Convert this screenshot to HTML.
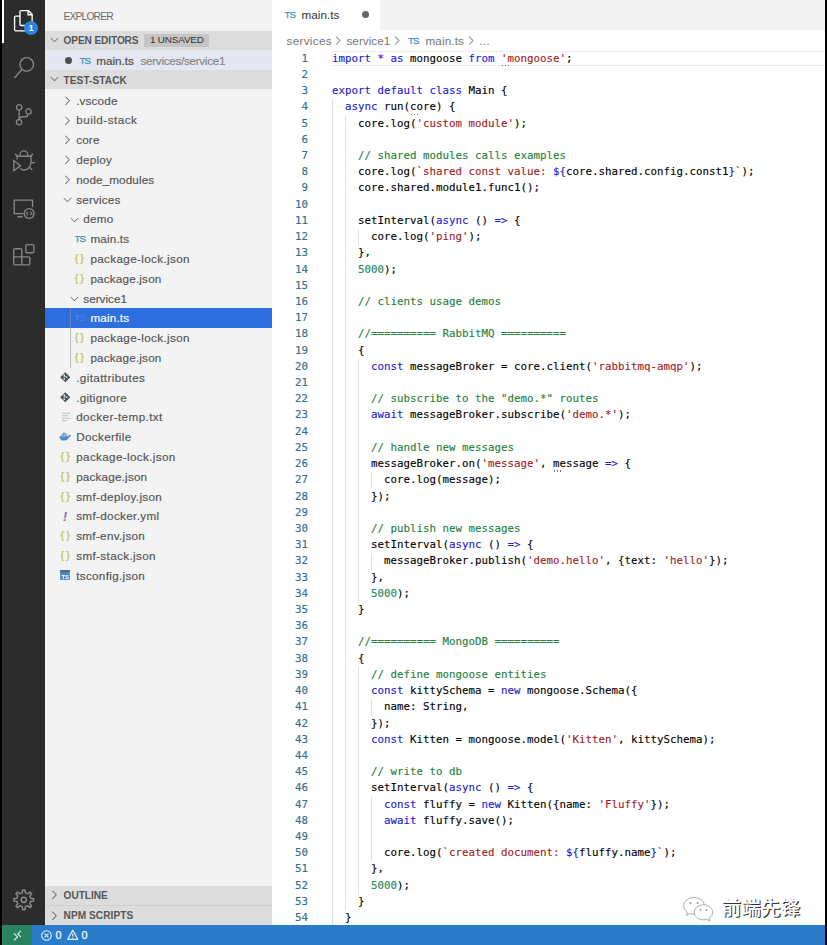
<!DOCTYPE html>
<html lang="en">
<head>
<meta charset="utf-8">
<title>main.ts — test-stack</title>
<style>
*{box-sizing:border-box;margin:0;padding:0}
html,body{width:827px;height:945px;overflow:hidden;background:#000}
body{position:relative;font-family:"Liberation Sans","Noto Sans CJK SC",sans-serif;font-size:11.7px;color:#555}
#win{position:absolute;left:2px;top:0;width:823px;height:945px;background:#fff;overflow:hidden}
#pg{position:absolute;left:-2px;top:0;width:827px;height:945px}
#act{position:absolute;left:2px;top:0;width:43.2px;height:925px;background:#2c2c2c}
#act .ind{position:absolute;left:0;top:0;width:2px;height:42.5px;background:#fff}
#act svg{position:absolute;left:10.8px;width:21.6px;height:21.6px;fill:#868686;overflow:visible}
#act svg.st{fill:none;stroke:#868686;stroke-width:1.5}
#act .bdg{position:absolute;left:22.100px;top:20.800px;width:14px;height:14px;border-radius:50%;background:#2d84dc;color:#fff;font-size:8.500px;font-weight:bold;text-align:center;line-height:14px}
#side{position:absolute;left:45px;top:0;width:227px;height:925px;background:#f3f3f3;overflow:hidden}
#side .abs{position:absolute}
.ttl{position:absolute;left:18.400px;top:10.500px;font-size:10.300px;line-height:12px;color:#6a6a6a;letter-spacing:-0.828px}
.hdr{position:absolute;left:0;width:227px;height:19.8px;background:#dcdcdc;font-weight:bold;font-size:10.1px;color:#565656;line-height:19.6px}
.hdr .t{position:absolute;left:18.6px;top:0;white-space:nowrap}
.hdr .chev{position:absolute;left:2.600px;top:2.600px;width:13px;height:13px;fill:#5a5a5a}
.badge{position:absolute;left:99.2px;top:3.400px;height:12.3px;width:65.3px;background:#c4c4c4;color:#333;font-weight:normal;font-size:9.9px;line-height:12.600px;text-align:center;letter-spacing:-0.173px}
.row{-webkit-text-stroke:0.18px;position:absolute;left:45px;width:227px;height:19.8px;line-height:19.2px;white-space:nowrap;color:#555}
.row.sel{background:#2e6fdf;color:#fff}
.row>span{position:absolute;top:0}
.chev{width:13px;height:13px;fill:#646465}
.row .cv .chev{position:absolute;left:0;top:3.400px}
.icw{width:14px;height:19.8px}
.icw .fi{position:absolute}
.ts{-webkit-text-stroke:0.25px;position:absolute;left:1px;top:0;color:#4a93b6;font-size:9.800px;letter-spacing:-1.1px;line-height:19.6px}
.json{position:absolute;left:1.300px;top:0;color:#c0c048;font-size:11px;letter-spacing:1.9px;line-height:18.400px}
.yml{position:absolute;left:3.600px;top:1.800px;color:#9b6bc0;font-size:12.500px;font-style:italic;font-weight:bold;line-height:19.500px}
.sel .ts{color:#4a80e2}
.tg{position:absolute;left:70px;width:1px;background:rgba(150,150,150,.6)}
#ed{position:absolute;left:272px;top:0;width:553px;height:925px;background:#fff}
#tabs{position:absolute;left:272px;top:0;width:553px;height:30.2px;background:#f3f3f3}
#tab{position:absolute;left:0;top:0;width:107.500px;height:30.2px;background:#fff;color:#333}
#tab span,#bc span{position:absolute;top:0;white-space:nowrap}
#bc{position:absolute;left:272px;top:30.5px;width:553px;height:20px;line-height:20.400px;color:#757575}
#bc svg{position:absolute;top:3.800px;width:12.500px;height:12.500px;fill:#7d7d7d}
.ln{position:absolute;left:272.5px;width:35.500px;text-align:right;height:16.2px;line-height:16.2px;color:#33708a;-webkit-text-stroke:0.15px;font-family:"DejaVu Sans Mono","Liberation Mono",monospace;font-size:10.8px}
.cl{-webkit-text-stroke:0.12px;position:absolute;left:332px;height:16.2px;line-height:16.2px;color:#000;font-family:"DejaVu Sans Mono","Liberation Mono",monospace;font-size:10.8px;white-space:pre}
.k{color:#2018d8}.s{color:#a01c1c}.c{color:#23803c}.n{color:#238a64}
.ig{position:absolute;width:1px;background:#dfdfdf}
.dots{position:absolute;height:1.500px;width:9px}
.dots i{position:absolute;top:0;width:1.600px;height:1.600px;background:#777}
.dots i:nth-child(1){left:0.500px}.dots i:nth-child(2){left:3.600px}.dots i:nth-child(3){left:6.700px}
#cur{position:absolute;left:332px;top:50.7px;width:491.500px;height:15.800px;border-top:1px solid #ececec;border-bottom:1px solid #ececec}
#status{-webkit-text-stroke:0.25px;position:absolute;left:2px;top:925px;width:823px;height:20px;background:#2b7bcb;color:#fff;font-size:10.8px;line-height:20.400px}
#status svg{position:absolute;overflow:visible}
#remote{position:absolute;left:0;top:0;width:30px;height:20px;background:#2a8360}
#wm{position:absolute;left:721.500px;top:895px;font-size:19.700px;line-height:26px;color:#fff;white-space:nowrap;font-family:"Liberation Sans","Noto Sans CJK SC",sans-serif;font-weight:500;text-shadow:1.100px 1.100px 0.400px rgba(30,30,30,.92)}
#wmi{position:absolute;left:681px;top:894px;width:36px;height:30px;overflow:visible}
</style>
</head>
<body>
<div id="win"><div id="pg">

<!-- activity bar -->
<div id="act">
  <div class="ind"></div>
  <!-- explorer -->
  <svg viewBox="0 0 24 24" style="top:9.950px;fill:#fff"><path d="M17.5 0h-9L7 1.500V6H2.500L1 7.500v15.070L2.500 24h12.070L16 22.570V18h4.700l1.300-1.430V4.500L17.500 0zm0 2.120l2.380 2.380H17.500V2.120zm-3 20.380h-12v-15H7v9.070L8.500 18h6v4.500zm6-6h-12v-15H16V6h4.500v10.500z"/></svg>
  <div class="bdg">1</div>
  <!-- search -->
  <svg viewBox="0 0 24 24" style="top:56.550px"><path d="M15.250 0a8.250 8.250 0 0 0-6.180 13.720L1 22.880l1.120 1 8.050-9.120A8.251 8.251 0 1 0 15.250.01V0zm0 15a6.750 6.750 0 1 1 0-13.500 6.750 6.750 0 0 1 0 13.500z"/></svg>
  <!-- source control -->
  <svg viewBox="0 0 24 24" style="top:103.950px"><path d="M21.007 8.222A3.738 3.738 0 0 0 15.045 5.200a3.737 3.737 0 0 0 1.156 6.583 2.988 2.988 0 0 1-2.668 1.670h-2.990a4.456 4.456 0 0 0-2.989 1.165V7.400a3.737 3.737 0 1 0-1.494 0v9.117a3.776 3.776 0 1 0 1.816.099 2.990 2.990 0 0 1 2.668-1.667h2.990a4.484 4.484 0 0 0 4.223-3.039 3.736 3.736 0 0 0 3.250-3.687zM4.565 3.738a2.242 2.242 0 1 1 4.484 0 2.242 2.242 0 0 1-4.484 0zm4.484 16.441a2.242 2.242 0 1 1-4.484 0 2.242 2.242 0 0 1 4.484 0zm8.221-9.715a2.242 2.242 0 1 1 0-4.485 2.242 2.242 0 0 1 0 4.485z"/></svg>
  <!-- debug -->
  <svg class="st" viewBox="0 0 24 24" style="top:150.400px"><path d="M0.900 11.800V23L8.400 17.400Z" stroke-linejoin="miter"/><path d="M7.900 6.900V5.200a4.200 4.200 0 0 1 8.400 0V6.900"/><path d="M4.600 10.600V6.900H20v5.800c0 5.300-3 9.500-7.600 9.500-1.700 0-3.200-.6-4.400-1.700"/><path d="M2.300 4.200l2.600 2.700M22.100 4.200l-2.400 2.700M20.200 14.100h4.100M18.700 19.400l2.700 3"/></svg>
  <!-- remote explorer -->
  <svg class="st" viewBox="0 0 24 24" style="top:197.800px"><path d="M11.400 17.400H1.350V2.400h20.400v7.600M5 20.850h5.800"/><circle cx="17.900" cy="17.200" r="5.400"/><path d="M16.700 15.300l-1.900 1.900 1.900 1.900M19.100 15.300l1.900 1.900-1.900 1.900" stroke-width="1.200"/></svg>
  <!-- extensions -->
  <svg viewBox="0 0 24 24" style="top:244.200px"><path d="M13.500 1.500L15 0h7.500L24 1.500V9l-1.500 1.500H15L13.500 9V1.500zm1.500 0V9h7.500V1.500H15zM0 15V6l1.500-1.500H9L10.500 6v7.500H18l1.500 1.500v7.500L18 24H1.500L0 22.500V15zm9-1.500V6H1.500v7.500H9zM9 15H1.500v7.500H9V15zm1.500 7.500H18V15h-7.500v7.500z"/></svg>
  <!-- gear -->
  <svg class="st" viewBox="0 0 24 24" style="top:889.200px;stroke-width:1.75"><path d="M10.32 4.18 L10.71 1.08 L13.29 1.08 L13.68 4.18 L16.34 5.28 L18.81 3.36 L20.64 5.19 L18.72 7.66 L19.82 10.32 L22.92 10.71 L22.92 13.29 L19.82 13.68 L18.72 16.34 L20.64 18.81 L18.81 20.64 L16.34 18.72 L13.68 19.82 L13.29 22.92 L10.71 22.92 L10.32 19.82 L7.66 18.72 L5.19 20.64 L3.36 18.81 L5.28 16.34 L4.18 13.68 L1.08 13.29 L1.08 10.71 L4.18 10.32 L5.28 7.66 L3.36 5.19 L5.19 3.36 L7.66 5.28Z" stroke-linejoin="round"/><circle cx="12" cy="12" r="2.900"/></svg>
</div>

<!-- sidebar -->
<div id="side">
  <div class="ttl">EXPLORER</div>
  <div class="hdr" style="top:30.900px;height:19.400px"><svg class="chev" viewBox="0 0 16 16"><path d="M7.976 10.072l4.357-4.357.62.618L8.284 11h-.618L3 6.333l.619-.618 4.357 4.357z"/></svg><span class="t" style="letter-spacing:-0.104px">OPEN EDITORS</span><span class="badge">1 UNSAVED</span></div>
  <div class="abs" style="left:0;top:50.300px;width:227px;height:19.500px;background:#e4e6f1"></div>
  <div class="hdr" style="top:69.800px;height:19.600px;line-height:22.600px"><svg class="chev" viewBox="0 0 16 16"><path d="M7.976 10.072l4.357-4.357.62.618L8.284 11h-.618L3 6.333l.619-.618 4.357 4.357z"/></svg><span class="t" style="letter-spacing:0.066px">TEST-STACK</span></div>
  <div class="hdr" style="top:885.500px"><svg class="chev" viewBox="0 0 16 16"><path d="M5.7 13.7L5 13l4.6-4.6L5 3.7l.7-.7 5 5v.7z"/></svg><span class="t" style="letter-spacing:-0.021px">OUTLINE</span></div>
  <div class="hdr" style="top:905.300px;border-top:1px solid #d0d0d0"><svg class="chev" viewBox="0 0 16 16"><path d="M5.7 13.7L5 13l4.6-4.6L5 3.7l.7-.7 5 5v.7z"/></svg><span class="t" style="letter-spacing:0.057px">NPM SCRIPTS</span></div>
</div>
<div class="row" style="top:50.600px"><span style="left:20px;top:6.300px;width:7px;height:7px;border-radius:50%;background:#505050"></span><span class="icw" style="left:33.500px"><span class="ts">TS</span></span><span style="left:51.200px;color:#4e4e4e">main.ts</span><span style="left:95.500px;color:#858585;letter-spacing:-0.296px">services/service1</span></div>
<div class="row" style="top:90.50px"><span class="cv" style="left:15.5px"><svg class="chev" viewBox="0 0 16 16"><path d="M5.7 13.7L5 13l4.6-4.6L5 3.7l.7-.7 5 5v.7z"/></svg></span><span class="lb" style="left:31.2px;letter-spacing:0.155px">.vscode</span></div>
<div class="row" style="top:110.30px"><span class="cv" style="left:15.5px"><svg class="chev" viewBox="0 0 16 16"><path d="M5.7 13.7L5 13l4.6-4.6L5 3.7l.7-.7 5 5v.7z"/></svg></span><span class="lb" style="left:31.2px;letter-spacing:0.482px">build-stack</span></div>
<div class="row" style="top:130.10px"><span class="cv" style="left:15.5px"><svg class="chev" viewBox="0 0 16 16"><path d="M5.7 13.7L5 13l4.6-4.6L5 3.7l.7-.7 5 5v.7z"/></svg></span><span class="lb" style="left:31.2px;letter-spacing:0.163px">core</span></div>
<div class="row" style="top:149.90px"><span class="cv" style="left:15.5px"><svg class="chev" viewBox="0 0 16 16"><path d="M5.7 13.7L5 13l4.6-4.6L5 3.7l.7-.7 5 5v.7z"/></svg></span><span class="lb" style="left:31.2px;letter-spacing:0.254px">deploy</span></div>
<div class="row" style="top:169.70px"><span class="cv" style="left:15.5px"><svg class="chev" viewBox="0 0 16 16"><path d="M5.7 13.7L5 13l4.6-4.6L5 3.7l.7-.7 5 5v.7z"/></svg></span><span class="lb" style="left:31.2px;letter-spacing:0.113px">node_modules</span></div>
<div class="row" style="top:189.50px"><span class="cv" style="left:15.5px"><svg class="chev" viewBox="0 0 16 16"><path d="M7.976 10.072l4.357-4.357.62.618L8.284 11h-.618L3 6.333l.619-.618 4.357 4.357z"/></svg></span><span class="lb" style="left:31.2px;letter-spacing:0.191px">services</span></div>
<div class="row" style="top:209.30px"><span class="cv" style="left:22.6px"><svg class="chev" viewBox="0 0 16 16"><path d="M7.976 10.072l4.357-4.357.62.618L8.284 11h-.618L3 6.333l.619-.618 4.357 4.357z"/></svg></span><span class="lb" style="left:38.3px;letter-spacing:0.244px">demo</span></div>
<div class="row" style="top:229.10px"><span class="icw" style="left:28.5px"><span class="ts">TS</span></span><span class="lb" style="left:45.4px;letter-spacing:0.173px">main.ts</span></div>
<div class="row" style="top:248.90px"><span class="icw" style="left:28.5px"><span class="json">{}</span></span><span class="lb" style="left:45.4px;letter-spacing:0.347px">package-lock.json</span></div>
<div class="row" style="top:268.70px"><span class="icw" style="left:28.5px"><span class="json">{}</span></span><span class="lb" style="left:45.4px;letter-spacing:0.186px">package.json</span></div>
<div class="row" style="top:288.50px"><span class="cv" style="left:22.6px"><svg class="chev" viewBox="0 0 16 16"><path d="M7.976 10.072l4.357-4.357.62.618L8.284 11h-.618L3 6.333l.619-.618 4.357 4.357z"/></svg></span><span class="lb" style="left:38.3px;letter-spacing:0.026px">service1</span></div>
<div class="row sel" style="top:308.30px"><span class="icw" style="left:28.5px"><span class="ts">TS</span></span><span class="lb" style="left:45.4px;letter-spacing:0.173px">main.ts</span></div>
<div class="row" style="top:328.10px"><span class="icw" style="left:28.5px"><span class="json">{}</span></span><span class="lb" style="left:45.4px;letter-spacing:0.347px">package-lock.json</span></div>
<div class="row" style="top:347.90px"><span class="icw" style="left:28.5px"><span class="json">{}</span></span><span class="lb" style="left:45.4px;letter-spacing:0.186px">package.json</span></div>
<div class="row" style="top:367.70px"><span class="icw" style="left:14.3px"><svg class="fi" viewBox="0 0 12 12" style="left:0.300px;top:4.500px;width:10.500px;height:10.500px"><path d="M6 0.300L11.700 6 6 11.700 0.300 6z" fill="#41535b"/><path d="M4.800 3.300V8.400M4.800 4.200L7.800 6" stroke="#f3f3f3" stroke-width="0.8" fill="none"/><circle cx="4.800" cy="3.600" r="0.9" fill="#f3f3f3"/><circle cx="4.800" cy="8.200" r="0.9" fill="#f3f3f3"/><circle cx="7.700" cy="6" r="0.9" fill="#f3f3f3"/></svg></span><span class="lb" style="left:31.2px;letter-spacing:0.386px">.gitattributes</span></div>
<div class="row" style="top:387.50px"><span class="icw" style="left:14.3px"><svg class="fi" viewBox="0 0 12 12" style="left:0.300px;top:4.500px;width:10.500px;height:10.500px"><path d="M6 0.300L11.700 6 6 11.700 0.300 6z" fill="#41535b"/><path d="M4.800 3.300V8.400M4.800 4.200L7.800 6" stroke="#f3f3f3" stroke-width="0.8" fill="none"/><circle cx="4.800" cy="3.600" r="0.9" fill="#f3f3f3"/><circle cx="4.800" cy="8.200" r="0.9" fill="#f3f3f3"/><circle cx="7.700" cy="6" r="0.9" fill="#f3f3f3"/></svg></span><span class="lb" style="left:31.2px;letter-spacing:0.263px">.gitignore</span></div>
<div class="row" style="top:407.30px"><span class="icw" style="left:14.3px"><svg class="fi" viewBox="0 0 12 12" style="left:1.500px;top:5px;width:10px;height:10px"><path d="M1 1.500h10M1 4.500h7.500M1 7.500h10M1 10.500h6" stroke="#bebebe" stroke-width="1.2" fill="none"/></svg></span><span class="lb" style="left:31.2px;letter-spacing:0.402px">docker-temp.txt</span></div>
<div class="row" style="top:427.10px"><span class="icw" style="left:14.3px"><svg class="fi" viewBox="0 0 14 10" style="left:-0.800px;top:5.200px;width:12.500px;height:9px"><path d="M0.400 4.600h9.800c.5-.2.800-.6.900-1.200.3-.8.900-.9 1.300-.6.600.4.700.9.500 1.500C12.600 5.500 11.600 5.900 10.900 6 10 8.500 8 9.600 5.200 9.600 2.400 9.600.7 8 .4 4.600z" fill="#4b8fc6"/><path d="M2.200 2.700h1.600v1.500H2.200zM4.100 2.700h1.600v1.500H4.100zM6 2.700h1.600v1.500H6zM4.100 .9h1.600v1.500H4.100zM6 .9h1.600v1.500H6zM7.900 2.700h1.600v1.500H7.900z" fill="#4b8fc6"/></svg></span><span class="lb" style="left:31.2px;letter-spacing:0.331px">Dockerfile</span></div>
<div class="row" style="top:446.90px"><span class="icw" style="left:14.3px"><span class="json">{}</span></span><span class="lb" style="left:31.2px;letter-spacing:0.347px">package-lock.json</span></div>
<div class="row" style="top:466.70px"><span class="icw" style="left:14.3px"><span class="json">{}</span></span><span class="lb" style="left:31.2px;letter-spacing:0.186px">package.json</span></div>
<div class="row" style="top:486.50px"><span class="icw" style="left:14.3px"><span class="json">{}</span></span><span class="lb" style="left:31.2px;letter-spacing:0.334px">smf-deploy.json</span></div>
<div class="row" style="top:506.30px"><span class="icw" style="left:14.3px"><span class="yml">!</span></span><span class="lb" style="left:31.2px;letter-spacing:0.334px">smf-docker.yml</span></div>
<div class="row" style="top:526.10px"><span class="icw" style="left:14.3px"><span class="json">{}</span></span><span class="lb" style="left:31.2px;letter-spacing:0.300px">smf-env.json</span></div>
<div class="row" style="top:545.90px"><span class="icw" style="left:14.3px"><span class="json">{}</span></span><span class="lb" style="left:31.2px;letter-spacing:0.364px">smf-stack.json</span></div>
<div class="row" style="top:565.70px"><span class="icw" style="left:14.3px"><svg class="fi" viewBox="0 0 12 12" style="left:0.800px;top:4.800px;width:10px;height:10px"><rect x="0.200" y="0.200" width="11.600" height="11.600" fill="#4a87ba"/><rect x="0.200" y="0.200" width="11.600" height="2.400" fill="#3a6d99"/><text x="6.200" y="10.600" font-family="Liberation Sans, sans-serif" font-size="7" font-weight="bold" fill="#fff" text-anchor="middle">TS</text></svg></span><span class="lb" style="left:31.2px;letter-spacing:0.309px">tsconfig.json</span></div>
<div class="tg" style="top:307.500px;height:60px"></div>

<!-- editor -->
<div id="ed"></div>
<div id="tabs"><div id="tab">
  <span class="icw" style="left:11.500px;top:0"><span class="ts" style="line-height:30.800px">TS</span></span>
  <span style="left:29.600px;line-height:30.400px">main.ts</span>
  <span style="left:89.600px;top:11.300px;width:7.200px;height:7.200px;border-radius:50%;background:#666"></span>
</div></div>
<div id="bc"><span style="left:14.500px;letter-spacing:.32px">services</span><svg viewBox="0 0 16 16" style="left:60.300px"><path d="M5.700 13.700L5 13l4.600-4.600L5 3.700l.700-.700 5 5v.700z"/></svg><span style="left:74.500px;letter-spacing:.02px">service1</span><svg viewBox="0 0 16 16" style="left:118.800px"><path d="M5.700 13.700L5 13l4.600-4.600L5 3.700l.700-.700 5 5v.700z"/></svg><span class="icw" style="left:135px"><span class="ts" style="line-height:20px">TS</span></span><span style="left:153.500px;letter-spacing:.12px">main.ts</span><svg viewBox="0 0 16 16" style="left:192.800px"><path d="M5.700 13.700L5 13l4.600-4.600L5 3.700l.700-.700 5 5v.700z"/></svg><span style="left:206.500px;letter-spacing:-.6px">…</span></div>
<div id="cur"></div>
<div class="ig" style="left:332.00px;top:99.34px;height:825.65px"></div>
<div class="ig" style="left:345.00px;top:115.56px;height:794.53px"></div>
<div class="ig" style="left:358.00px;top:229.06px;height:16.21px"></div>
<div class="ig" style="left:358.00px;top:358.78px;height:243.22px"></div>
<div class="ig" style="left:371.00px;top:472.29px;height:16.21px"></div>
<div class="ig" style="left:371.00px;top:553.37px;height:16.21px"></div>
<div class="ig" style="left:358.00px;top:666.87px;height:227.01px"></div>
<div class="ig" style="left:371.00px;top:699.30px;height:16.21px"></div>
<div class="ig" style="left:371.00px;top:796.59px;height:64.86px"></div>
<div class="ln" style="top:50.70px">1</div>
<div class="cl" style="top:50.70px"><span class="k">import * as</span> mongoose <span class="k">from</span> <span class="s">'mongoose'</span>;</div>
<div class="ln" style="top:66.92px">2</div>
<div class="ln" style="top:83.13px">3</div>
<div class="cl" style="top:83.13px"><span class="k">export default class</span> Main {</div>
<div class="ln" style="top:99.34px">4</div>
<div class="cl" style="top:99.34px">  <span class="k">async</span> run(core) {</div>
<div class="ln" style="top:115.56px">5</div>
<div class="cl" style="top:115.56px">    core.log(<span class="s">'custom module'</span>);</div>
<div class="ln" style="top:131.78px">6</div>
<div class="ln" style="top:147.99px">7</div>
<div class="cl" style="top:147.99px">    <span class="c">// shared modules calls examples</span></div>
<div class="ln" style="top:164.20px">8</div>
<div class="cl" style="top:164.20px">    core.log(<span class="s">`shared const value: </span><span class="k">${</span>core.shared.config.const1<span class="k">}</span><span class="s">`</span>);</div>
<div class="ln" style="top:180.42px">9</div>
<div class="cl" style="top:180.42px">    core.shared.module1.func1();</div>
<div class="ln" style="top:196.63px">10</div>
<div class="ln" style="top:212.85px">11</div>
<div class="cl" style="top:212.85px">    setInterval(<span class="k">async</span> () <span class="k">=&gt;</span> {</div>
<div class="ln" style="top:229.06px">12</div>
<div class="cl" style="top:229.06px">      core.log(<span class="s">'ping'</span>);</div>
<div class="ln" style="top:245.28px">13</div>
<div class="cl" style="top:245.28px">    },</div>
<div class="ln" style="top:261.50px">14</div>
<div class="cl" style="top:261.50px">    <span class="n">5000</span>);</div>
<div class="ln" style="top:277.71px">15</div>
<div class="ln" style="top:293.93px">16</div>
<div class="cl" style="top:293.93px">    <span class="c">// clients usage demos</span></div>
<div class="ln" style="top:310.14px">17</div>
<div class="ln" style="top:326.35px">18</div>
<div class="cl" style="top:326.35px">    <span class="c">//========== RabbitMQ ==========</span></div>
<div class="ln" style="top:342.57px">19</div>
<div class="cl" style="top:342.57px">    {</div>
<div class="ln" style="top:358.78px">20</div>
<div class="cl" style="top:358.78px">      <span class="k">const</span> messageBroker = core.client(<span class="s">'rabbitmq-amqp'</span>);</div>
<div class="ln" style="top:375.00px">21</div>
<div class="ln" style="top:391.21px">22</div>
<div class="cl" style="top:391.21px">      <span class="c">// subscribe to the "demo.*" routes</span></div>
<div class="ln" style="top:407.43px">23</div>
<div class="cl" style="top:407.43px">      <span class="k">await</span> messageBroker.subscribe(<span class="s">'demo.*'</span>);</div>
<div class="ln" style="top:423.64px">24</div>
<div class="ln" style="top:439.86px">25</div>
<div class="cl" style="top:439.86px">      <span class="c">// handle new messages</span></div>
<div class="ln" style="top:456.07px">26</div>
<div class="cl" style="top:456.07px">      messageBroker.on(<span class="s">'message'</span>, message <span class="k">=&gt;</span> {</div>
<div class="ln" style="top:472.29px">27</div>
<div class="cl" style="top:472.29px">        core.log(message);</div>
<div class="ln" style="top:488.50px">28</div>
<div class="cl" style="top:488.50px">      });</div>
<div class="ln" style="top:504.72px">29</div>
<div class="ln" style="top:520.94px">30</div>
<div class="cl" style="top:520.94px">      <span class="c">// publish new messages</span></div>
<div class="ln" style="top:537.15px">31</div>
<div class="cl" style="top:537.15px">      setInterval(<span class="k">async</span> () <span class="k">=&gt;</span> {</div>
<div class="ln" style="top:553.37px">32</div>
<div class="cl" style="top:553.37px">        messageBroker.publish(<span class="s">'demo.hello'</span>, {text: <span class="s">'hello'</span>});</div>
<div class="ln" style="top:569.58px">33</div>
<div class="cl" style="top:569.58px">      },</div>
<div class="ln" style="top:585.80px">34</div>
<div class="cl" style="top:585.80px">      <span class="n">5000</span>);</div>
<div class="ln" style="top:602.01px">35</div>
<div class="cl" style="top:602.01px">    }</div>
<div class="ln" style="top:618.23px">36</div>
<div class="ln" style="top:634.44px">37</div>
<div class="cl" style="top:634.44px">    <span class="c">//========== MongoDB ==========</span></div>
<div class="ln" style="top:650.66px">38</div>
<div class="cl" style="top:650.66px">    {</div>
<div class="ln" style="top:666.87px">39</div>
<div class="cl" style="top:666.87px">      <span class="c">// define mongoose entities</span></div>
<div class="ln" style="top:683.09px">40</div>
<div class="cl" style="top:683.09px">      <span class="k">const</span> kittySchema = <span class="k">new</span> mongoose.Schema({</div>
<div class="ln" style="top:699.30px">41</div>
<div class="cl" style="top:699.30px">        name: String,</div>
<div class="ln" style="top:715.51px">42</div>
<div class="cl" style="top:715.51px">      });</div>
<div class="ln" style="top:731.73px">43</div>
<div class="cl" style="top:731.73px">      <span class="k">const</span> Kitten = mongoose.model(<span class="s">'Kitten'</span>, kittySchema);</div>
<div class="ln" style="top:747.95px">44</div>
<div class="ln" style="top:764.16px">45</div>
<div class="cl" style="top:764.16px">      <span class="c">// write to db</span></div>
<div class="ln" style="top:780.38px">46</div>
<div class="cl" style="top:780.38px">      setInterval(<span class="k">async</span> () <span class="k">=&gt;</span> {</div>
<div class="ln" style="top:796.59px">47</div>
<div class="cl" style="top:796.59px">        <span class="k">const</span> fluffy = <span class="k">new</span> Kitten({name: <span class="s">'Fluffy'</span>});</div>
<div class="ln" style="top:812.81px">48</div>
<div class="cl" style="top:812.81px">        <span class="k">await</span> fluffy.save();</div>
<div class="ln" style="top:829.02px">49</div>
<div class="ln" style="top:845.24px">50</div>
<div class="cl" style="top:845.24px">        core.log(<span class="s">`created document: </span><span class="k">${</span>fluffy.name<span class="k">}</span><span class="s">`</span>);</div>
<div class="ln" style="top:861.45px">51</div>
<div class="cl" style="top:861.45px">      },</div>
<div class="ln" style="top:877.67px">52</div>
<div class="cl" style="top:877.67px">      <span class="n">5000</span>);</div>
<div class="ln" style="top:893.88px">53</div>
<div class="cl" style="top:893.88px">    }</div>
<div class="ln" style="top:910.10px">54</div>
<div class="cl" style="top:910.10px">  }</div>
<div class="dots" style="left:501.00px;top:64.90px"><i></i><i></i><i></i></div><div class="dots" style="left:410.00px;top:113.55px"><i></i><i></i><i></i></div><div class="dots" style="left:553.00px;top:470.27px"><i></i><i></i><i></i></div>

<!-- watermark -->
<svg id="wmi" viewBox="0 0 36 30"><g fill="#fff" stroke="#8a8a8a" stroke-width="0.700"><path d="M13 3.500c-5.800 0-10.300 3.700-10.300 8.300 0 2.600 1.400 4.800 3.700 6.400l-1 3.200 3.700-1.900c1.200.4 2.500.6 3.900.6 5.800 0 10.300-3.700 10.300-8.300S18.800 3.500 13 3.500z"/><path d="M22.500 10.800c-5.100 0-9.100 3.400-9.100 7.500s4 7.500 9.100 7.500c1.100 0 2.200-.2 3.200-.5l3.100 1.700-.8-2.800c2.200-1.400 3.600-3.500 3.600-5.900 0-4.100-4-7.500-9.100-7.500z"/></g><g fill="#9a9a9a"><circle cx="9.500" cy="9" r="1"/><circle cx="16.500" cy="9" r="1"/><circle cx="19.500" cy="16" r=".9"/><circle cx="25.500" cy="16" r=".9"/></g></svg>
<div id="wm">前端先锋</div>

<!-- status bar -->
<div id="status">
  <div id="remote"></div>
  <svg viewBox="0 0 10 12" style="left:11px;top:4.500px;width:9px;height:11px;fill:none;stroke:#d6f0e4;stroke-width:1.300"><path d="M1 3.700l4 3.900-4 3.900M8.800 .8L5.300 4.300l3.500 3.500"/></svg>
  <svg viewBox="0 0 12 12" style="left:38.700px;top:4.500px;width:11px;height:11px;fill:none;stroke:#e1eefb;stroke-width:1.2"><circle cx="6" cy="6" r="5.200"/><path d="M3.900 3.900l4.200 4.200M8.100 3.900L3.900 8.100"/></svg>
  <span style="position:absolute;left:53.500px;top:0">0</span>
  <svg viewBox="0 0 12 12" style="left:64.500px;top:4.300px;width:11.500px;height:11.500px;fill:none;stroke:#e1eefb;stroke-width:1.2"><path d="M6 1.200L11.300 10.800H.7z" stroke-linejoin="round"/><path d="M6 4.700v3.200M6 8.800v1"/></svg>
  <span style="position:absolute;left:79.500px;top:0">0</span>
</div>

</div></div>
</body>
</html>
